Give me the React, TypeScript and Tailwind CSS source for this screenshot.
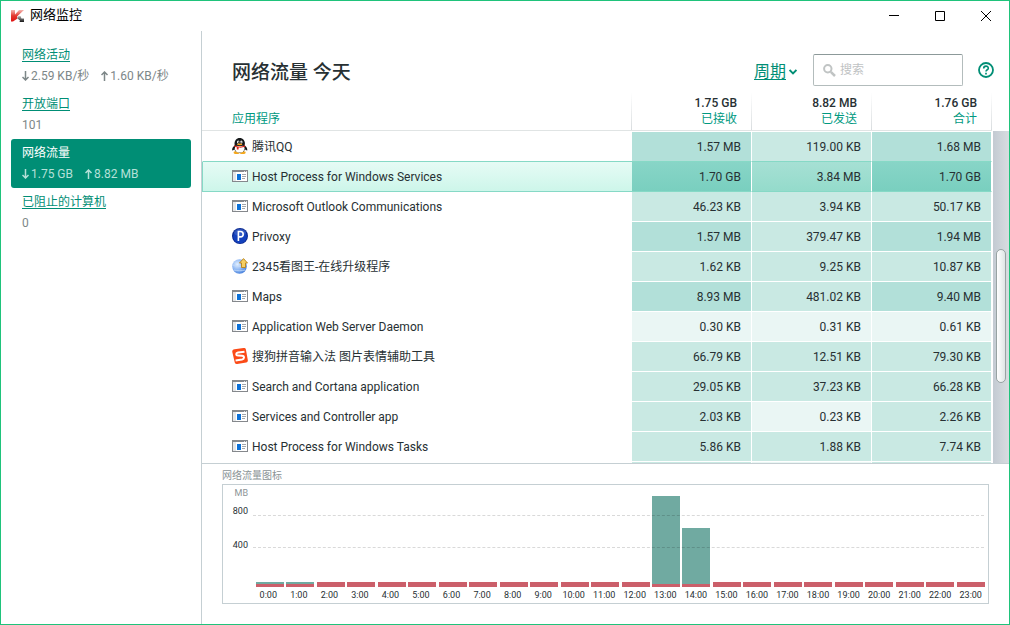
import { useState } from "react";
import type { ReactNode } from "react";

type Level = "low" | "mid" | "high";
type IconName = "qq" | "window" | "privoxy" | "globe" | "sogou";

interface AppRow {
    name: string;
    icon: IconName;
    values: [string, string, string];
}

interface Section {
    title: string;
    down?: string;
    up?: string;
    count?: string;
}

const SECTIONS: Section[] = [
    { title: "网络活动", down: "2.59 KB/秒", up: "1.60 KB/秒" },
    { title: "开放端口", count: "101" },
    { title: "网络流量", down: "1.75 GB", up: "8.82 MB" },
    { title: "已阻止的计算机", count: "0" },
];

const COLUMNS = [
    { total: "1.75 GB", label: "已接收" },
    { total: "8.82 MB", label: "已发送" },
    { total: "1.76 GB", label: "合计" },
];

const ROWS: AppRow[] = [
    { name: "腾讯QQ", icon: "qq", values: ["1.57 MB", "119.00 KB", "1.68 MB"] },
    { name: "Host Process for Windows Services", icon: "window", values: ["1.70 GB", "3.84 MB", "1.70 GB"] },
    { name: "Microsoft Outlook Communications", icon: "window", values: ["46.23 KB", "3.94 KB", "50.17 KB"] },
    { name: "Privoxy", icon: "privoxy", values: ["1.57 MB", "379.47 KB", "1.94 MB"] },
    { name: "2345看图王-在线升级程序", icon: "globe", values: ["1.62 KB", "9.25 KB", "10.87 KB"] },
    { name: "Maps", icon: "window", values: ["8.93 MB", "481.02 KB", "9.40 MB"] },
    { name: "Application Web Server Daemon", icon: "window", values: ["0.30 KB", "0.31 KB", "0.61 KB"] },
    { name: "搜狗拼音输入法 图片表情辅助工具", icon: "sogou", values: ["66.79 KB", "12.51 KB", "79.30 KB"] },
    { name: "Search and Cortana application", icon: "window", values: ["29.05 KB", "37.23 KB", "66.28 KB"] },
    { name: "Services and Controller app", icon: "window", values: ["2.03 KB", "0.23 KB", "2.26 KB"] },
    { name: "Host Process for Windows Tasks", icon: "window", values: ["5.86 KB", "1.88 KB", "7.74 KB"] },
];

// Received traffic per hour, in MB
const RECEIVED: Record<number, number> = { 0: 20, 1: 20, 13: 1100, 14: 700 };
const HOURS = Array.from({ length: 24 }, (_, hour) => hour);

const LEVEL_BG: Record<Level, string> = {
    low: "bg-[#eaf6f4]",
    mid: "bg-[#c9e9e3]",
    high: "bg-[#b2e0d9]",
};

const levelOf = (value: string): Level => {
    if (value.endsWith("MB") || value.endsWith("GB")) return "high";
    return parseFloat(value) < 1 ? "low" : "mid";
};

function AppLogo() {
    return (
        <svg width="13" height="13" viewBox="0 0 13 13" aria-hidden="true">
            <defs>
                <linearGradient id="logo-red" x1="0" y1="0" x2="0" y2="1">
                    <stop offset="0" stopColor="#f3b5b0" />
                    <stop offset=".5" stopColor="#e23a30" />
                    <stop offset="1" stopColor="#e01010" />
                </linearGradient>
                <linearGradient id="logo-gray" x1="0" y1="0" x2="0" y2="1">
                    <stop offset="0" stopColor="#b5b5b5" />
                    <stop offset="1" stopColor="#151515" />
                </linearGradient>
            </defs>
            <path d="M0 0h4v4.500L8 0h5L6 6.500 6.500 8.500 2 11.500H0z" fill="url(#logo-red)" />
            <path d="M6.500 6.500 9.500 6l1 2.500H13V12H8.500l.5-1.500L6.500 8.500z" fill="url(#logo-gray)" />
        </svg>
    );
}

function RowIcon({ name }: { name: IconName }) {
    if (name === "qq") {
        return (
            <svg width="16" height="16" viewBox="0 0 16 16" aria-hidden="true">
                <ellipse cx="4.600" cy="14.500" rx="3" ry="1.500" fill="#f5a81c" />
                <ellipse cx="10.600" cy="14.500" rx="3" ry="1.500" fill="#f5a81c" />
                <path d="M3 7.500C1 8.500-.2 10.500.2 12.600c1 0 2-1 2.800-2zM12.400 7.500c2 1 3.200 3 2.800 5.100-1 0-2-1-2.800-2z" fill="#15181a" />
                <ellipse cx="7.700" cy="9.700" rx="5.700" ry="5" fill="#15181a" />
                <ellipse cx="7.700" cy="10.600" rx="4.900" ry="4" fill="#fff" />
                <path d="M2.500 6.500C2.300 2.500 4.500 0 7.700 0s5.400 2.500 5.200 6.500c-2 2-8.400 2-10.400 0z" fill="#15181a" />
                <ellipse cx="6.200" cy="4" rx="1.200" ry="1.600" fill="#fff" />
                <ellipse cx="9.300" cy="4" rx="1.200" ry="1.600" fill="#fff" />
                <circle cx="6.600" cy="4.200" r=".6" fill="#000" />
                <circle cx="8.900" cy="4.200" r=".6" fill="#000" />
                <ellipse cx="7.700" cy="6.400" rx="2.700" ry=".8" fill="#f8a51b" />
                <path d="M2.400 7.200c3 1.700 7.600 1.700 10.600 0l.3 1.400C11 9.700 9 9.800 6.600 9.600v1.800H4.800V9.300L2.100 8.600z" fill="#e0281c" />
            </svg>
        );
    }
    if (name === "privoxy") {
        return (
            <svg width="16" height="16" viewBox="0 0 16 16" aria-hidden="true">
                <circle cx="8" cy="8" r="8" fill="#0a2a92" />
                <circle cx="8" cy="8.500" r="6.800" fill="#1341bd" />
                <ellipse cx="8" cy="4.500" rx="6" ry="3.500" fill="#4469c9" opacity=".6" />
                <path d="M6.400 13V3.500h2.100a2.700 2.700 0 0 1 0 5.400H6.400" fill="none" stroke="#fff" strokeWidth="1.600" />
            </svg>
        );
    }
    if (name === "globe") {
        return (
            <svg width="16" height="16" viewBox="0 0 16 16" aria-hidden="true">
                <defs>
                    <radialGradient id="globe" cx=".35" cy=".35" r=".75">
                        <stop offset="0" stopColor="#e3f0ff" />
                        <stop offset=".5" stopColor="#8fb8f3" />
                        <stop offset="1" stopColor="#3d78d8" />
                    </radialGradient>
                </defs>
                <circle cx="7.500" cy="8.500" r="7.300" fill="url(#globe)" />
                <path d="M1 7c4 2 9 2 13 0M2 12c3 1 8 1 11 0" fill="none" stroke="#c3daf9" strokeWidth=".8" />
                <path d="M11.500.6 15.500 5h-2v4.500h-4V5h-2z" fill="#f6cf62" stroke="#b8821a" strokeWidth=".9" />
            </svg>
        );
    }
    if (name === "sogou") {
        return (
            <svg width="16" height="16" viewBox="0 0 16 16" aria-hidden="true">
                <path d="M2.500 1.200 11.500 0c1.500-.2 2.200.3 2.400 1.600L15.800 12c.2 1.500-.3 2.200-1.600 2.500l-9 1.400c-1.500.2-2.200-.3-2.500-1.600L.3 4C0 2.500.8 1.500 2.500 1.200z" fill="#fb4a17" />
                <path d="M12.500 3.700 6 4.500c-2.500.4-2.300 3 0 3.100l4 .1c2.700.2 2.600 3.300 0 3.800L3.600 12.500" fill="none" stroke="#fff" strokeWidth="2" />
            </svg>
        );
    }
    return (
        <svg width="16" height="12" viewBox="0 0 16 12" shapeRendering="crispEdges" aria-hidden="true">
            <path d="M0 0h16v12H0z" fill="#85888c" />
            <path d="M1 2h14v9H1z" fill="#fff" />
            <path d="M1 2h3v9H1z" fill="#e4e6e8" />
            <path d="M5 4h4v6H5z" fill="#0a70d8" />
            <path d="M10 4h4v1h-4zM10 6h4v1h-4zM10 8h3v1h-3z" fill="#a3a6a9" />
            <path d="M12 1h1v1h-1zM14 1h1v1h-1z" fill="#d8dadc" />
        </svg>
    );
}

function Arrow({ up = false }: { up?: boolean }) {
    return (
        <svg width="9" height="10" viewBox="0 0 9 10" fill="none" stroke="currentColor" strokeWidth="1.500" aria-hidden="true">
            {up ? <path d="M3.500 10V1M.5 4l3-3 3 3" /> : <path d="M3.500 0v9M.5 6l3 3 3-3" />}
        </svg>
    );
}

function WindowButton({ label, children }: { label: string; children: ReactNode }) {
    return (
        <button type="button" aria-label={label} className="flex h-[30px] w-[46px] items-center justify-center hover:bg-gray-100">
            <svg width="10" height="10" viewBox="0 0 10 10" fill="none" stroke="#000" aria-hidden="true">
                {children}
            </svg>
        </button>
    );
}

function TitleBar() {
    return (
        <header className="flex items-center pl-[10px]">
            <AppLogo />
            <h1 className="ml-[6px] flex-1 pb-[2px] text-[13px] leading-5 text-black">网络监控</h1>
            <WindowButton label="最小化">
                <path d="M0 4.500h10" />
            </WindowButton>
            <WindowButton label="最大化">
                <path d="M.5.5h9v9h-9z" />
            </WindowButton>
            <WindowButton label="关闭">
                <path d="M0 0l10 10M10 0 0 10" />
            </WindowButton>
        </header>
    );
}

function Sidebar({ current, onSelect }: { current: number; onSelect: (index: number) => void }) {
    return (
        <nav className="w-[201px] shrink-0 border-r border-[#c5cfd3] px-[10px] pt-[10px]">
            {SECTIONS.map((section, index) => {
                const active = index === current;
                return (
                    <a
                        key={section.title}
                        href="#"
                        onClick={() => onSelect(index)}
                        className={`flex flex-col gap-px rounded-[3px] px-[11px] py-1 leading-5 ${active ? "bg-[#008e75] text-[#b5e0d8]" : "text-[#7d8788]"}`}
                    >
                        <span className={active ? "text-white" : "text-[#008e75] underline underline-offset-2"}>{section.title}</span>
                        {section.count ? (
                            <span>{section.count}</span>
                        ) : (
                            <span className="flex gap-3">
                                <span className="flex items-center">
                                    <Arrow />
                                    {section.down}
                                </span>
                                <span className="flex items-center">
                                    <Arrow up />
                                    {section.up}
                                </span>
                            </span>
                        )}
                    </a>
                );
            })}
        </nav>
    );
}

function Toolbar() {
    return (
        <div className="flex items-center pt-[23px] pr-[15px] pb-[6px] pl-[30px]">
            <h2 className="flex-1 pt-[6px] text-[19px] leading-6 font-medium text-[#273033]">网络流量 今天</h2>
            <button type="button" className="flex items-center gap-[3px] pt-1 text-base text-[#008e75]">
                <span className="underline underline-offset-2">周期</span>
                <svg width="8" height="6" viewBox="0 0 8 6" fill="none" stroke="currentColor" strokeWidth="1.800" aria-hidden="true">
                    <path d="M.6 1 4 4.400 7.400 1" />
                </svg>
            </button>
            <label className="ml-4 flex h-8 w-[150px] items-center gap-1 rounded-[2px] border border-[#b3bcbc] border-t-[#8c9999] bg-white pl-[9px]">
                <svg width="13" height="13" viewBox="0 0 13 13" fill="none" stroke="#c0c4c4" className="shrink-0" aria-hidden="true">
                    <circle cx="4.800" cy="4.800" r="3.700" strokeWidth="2" />
                    <path d="m7.800 7.800 4.200 4.200" strokeWidth="2.500" />
                </svg>
                <input type="text" aria-label="搜索" placeholder="搜索" className="w-full min-w-0 outline-none placeholder:text-[#bfc3c4]" />
            </label>
            <button type="button" aria-label="帮助" className="ml-[15px] text-[#008e75]">
                <svg width="16" height="16" viewBox="0 0 16 16" fill="none" stroke="currentColor" aria-hidden="true">
                    <circle cx="8" cy="8" r="7" strokeWidth="1.800" />
                    <path d="M5.700 6.400c0-3 4.600-3 4.600-.2C10.300 7.800 8 7.700 8 9.600" strokeWidth="1.600" />
                    <path d="M8 10.800v1.600" strokeWidth="1.700" />
                </svg>
            </button>
        </div>
    );
}

function cellClass(value: string, selected: boolean) {
    const level = levelOf(value);
    if (!selected) return LEVEL_BG[level];
    return value.endsWith("GB") ? "bg-linear-to-b from-[#88d5c7] to-[#79cfbf]" : "bg-linear-to-b from-[#a6e0d4] to-[#94dbcb]";
}

function TrafficTable() {
    const [selected, setSelected] = useState(1);
    const line = "bg-linear-to-b from-transparent to-[#d9dddf] bg-[length:1px_100%] bg-right bg-no-repeat";

    return (
        <div className="flex min-h-0 flex-1 overflow-hidden">
            <table className="flex-1 table-fixed border-separate border-spacing-0 self-start">
                <thead>
                    <tr className="h-[39px]">
                        <th className={`border-b border-[#e0e4e4] pb-px pl-[30px] text-left align-bottom leading-5 font-normal text-[#00997f] ${line}`}>
                            应用程序
                        </th>
                        {COLUMNS.map((column) => (
                            <th key={column.label} className={`w-[120px] border-b border-[#e0e4e4] pr-[15px] pb-[3px] text-right align-bottom leading-4 font-normal text-[#00997f] ${line}`}>
                                <span className="block font-medium text-[#273033]">{column.total}</span>
                                {column.label}
                            </th>
                        ))}
                    </tr>
                </thead>
                <tbody className="text-[#273033]">
                    {/* thin gap under the header */}
                    <tr className="h-px" aria-hidden="true">
                        <td colSpan={4} />
                    </tr>
                    {ROWS.map((row, index) => {
                        const active = index === selected;
                        // the row above draws the top edge of the selected one
                        const edge = active || index === selected - 1 ? "border-b-[#86d9c6]" : "border-b-white";
                        return (
                            <tr key={row.name} className="h-[30px]" onClick={() => setSelected(index)}>
                                <td className={`border-b border-l pl-[29px] ${edge} ${active ? "border-l-[#86d9c6] bg-linear-to-b from-[#e6fbf5] to-[#cdf6ea]" : "border-l-white"}`}>
                                    <span className="flex items-center gap-1 leading-4 whitespace-nowrap">
                                        <span className="pb-[2px]">
                                            <RowIcon name={row.icon} />
                                        </span>
                                        {row.name}
                                    </span>
                                </td>
                                {row.values.map((value, i) => (
                                    <td key={i} className={`border-r border-b border-r-white pr-[10px] text-right leading-4 ${edge} ${cellClass(value, active)}`}>
                                        {value}
                                    </td>
                                ))}
                            </tr>
                        );
                    })}
                    <tr className="h-[30px]" aria-hidden="true">
                        <td />
                        <td className="border-r border-white bg-[#c9e9e3]" />
                        <td className="border-r border-white bg-[#eaf6f4]" />
                        <td className="border-r border-white bg-[#c9e9e3]" />
                    </tr>
                </tbody>
            </table>
            <div className="mt-[39px] ml-px w-4 shrink-0 bg-linear-to-r from-[#c3cad2] to-[#d8dde0] px-[3px] pt-[118px]">
                <div className="h-[134px] w-[10px] rounded-full border border-[#98a3a3] bg-linear-to-r from-white to-[#dfe5e5]" />
            </div>
        </div>
    );
}

function TrafficChart() {
    return (
        <section className="border-t border-[#c5cfd3] px-5 pt-1 pb-5">
            <h3 className="text-[10px] leading-4 text-[#8b9496]">网络流量图标</h3>
            <div className="flex border border-[#c5cfd3] pr-[2px] text-[9px] leading-4 text-[#273033]">
                <div className="w-[30px] pr-[5px] text-right">
                    <div className="text-[#8b9496]">MB</div>
                    <div className="mt-[2px]">800</div>
                    <div className="mt-[18px]">400</div>
                </div>
                <div className="flex-1">
                    <div className="relative grid h-[102px] grid-cols-24 items-end pl-[2px]">
                        {HOURS.map((hour) => {
                            const received = RECEIVED[hour] ?? 0;
                            return (
                                <div key={hour} className="ml-px w-[28px]">
                                    <div className="bg-[#70aaa1]" style={{ height: Math.round(received * 0.08) }} />
                                    <div className={`bg-[#cb5f6a] ${received ? "h-[3px]" : "h-[5px]"}`} />
                                </div>
                            );
                        })}
                        <div className="absolute right-[2px] bottom-[71px] left-0 border-t border-dashed border-black/15" />
                        <div className="absolute right-[2px] bottom-[39px] left-0 border-t border-dashed border-black/15" />
                    </div>
                    <div className="grid grid-cols-24 text-center">
                        {HOURS.map((hour) => (
                            <span key={hour}>{hour}:00</span>
                        ))}
                    </div>
                </div>
            </div>
        </section>
    );
}

export default function App() {
    const [section, setSection] = useState(2);

    return (
        <div className="flex h-screen flex-col border border-[#1fc37b] bg-white font-['Roboto','Noto_Sans_CJK_SC',sans-serif] text-xs">
            <TitleBar />
            <div className="flex min-h-0 flex-1">
                <Sidebar current={section} onSelect={setSection} />
                <main className="flex min-w-0 flex-1 flex-col">
                    <Toolbar />
                    <TrafficTable />
                    <TrafficChart />
                </main>
            </div>
        </div>
    );
}
